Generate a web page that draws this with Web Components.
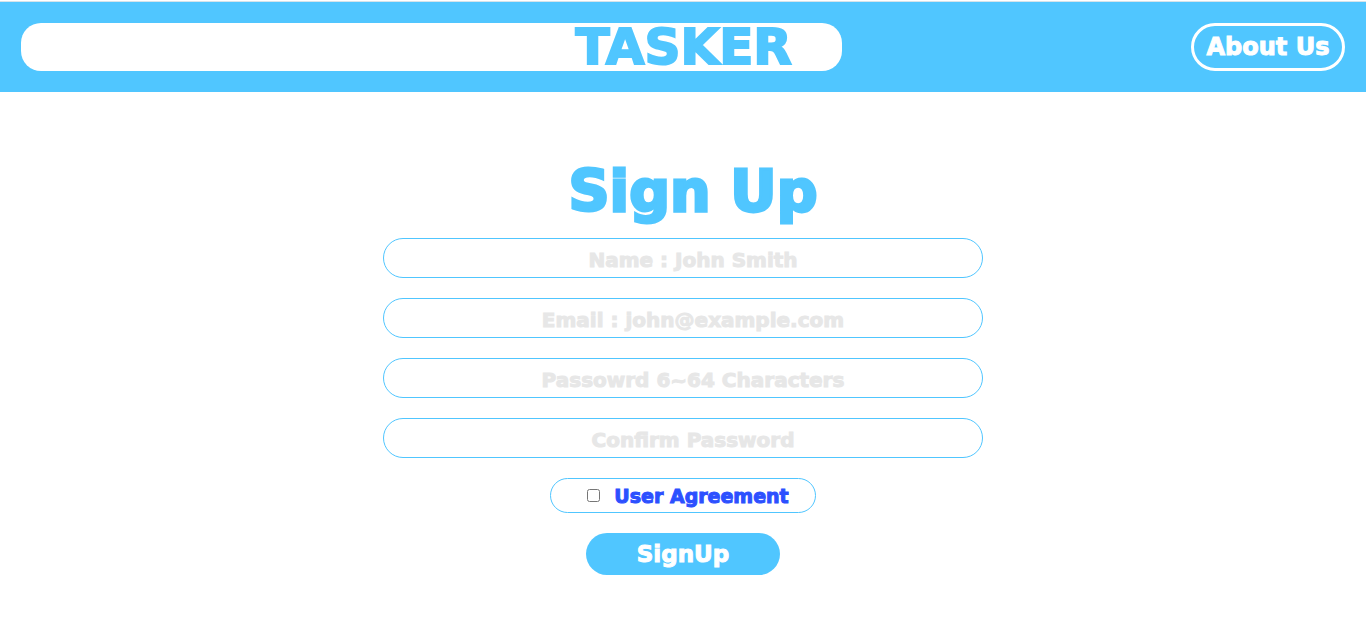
<!DOCTYPE html>
<html lang="en">
<head>
<meta charset="utf-8">
<meta name="viewport" content="width=device-width, initial-scale=1">
<title>Tasker - Sign Up</title>
<style>
  :root { --sky: #50c6ff; --link: #2c50ff; --hint: #e7e7e7; }
  body { margin: 0; background: #fff; font-family: "DejaVu Sans", Verdana, sans-serif; font-weight: 700; }
</style>
</head>
<body>
<tasker-header></tasker-header>
<main>
  <signup-form>
    <span slot="title">Sign Up</span>
    <pill-field type="text" hint="Name : John Smith"></pill-field>
    <pill-field type="email" hint="Email : john@example.com"></pill-field>
    <pill-field type="password" hint="Passowrd 6~64 Characters"></pill-field>
    <pill-field type="password" hint="Confirm Password"></pill-field>
    <agreement-check>User Agreement</agreement-check>
    <pill-button>SignUp</pill-button>
  </signup-form>
</main>
<script>
  const define = (name, html, setup) => customElements.define(name, class extends HTMLElement {
    constructor() {
      super();
      this.attachShadow({ mode: "open" }).innerHTML = html;
    }
    connectedCallback() { if (setup) setup(this, this.shadowRoot); }
  });

  define("tasker-header", `
    <style>
      :host { display: block; margin-top: 1px; border-top: 1px solid #d5e3ea; }
      header { display: flex; justify-content: space-between; align-items: center; padding: 21px; background: var(--sky); }
      .brand { box-sizing: border-box; width: 62%; height: 48px; padding-right: 50px; border-radius: 20px; background: #fff;
        color: var(--sky); font-size: 50px; line-height: 48px; text-align: right; -webkit-text-stroke: 2px; }
      .about { box-sizing: border-box; width: 154px; height: 48px; border: 3px solid #fff; border-radius: 24px; color: #fff;
        font-size: 24px; line-height: 42px; text-align: center; text-decoration: none; white-space: nowrap; -webkit-text-stroke: 1px; }
    </style>
    <header>
      <div class="brand">TASKER</div>
      <a class="about" href="#about">About Us</a>
    </header>`);

  define("signup-form", `
    <style>
      :host { display: block; padding: 72px 16px 64px; }
      form { display: flex; flex-direction: column; align-items: center; gap: 20px; max-width: 600px; margin: 0 auto; }
      h1 { margin: 0; padding-left: 20px; color: var(--sky); font-size: 57px; font-weight: 700; line-height: 54px; -webkit-text-stroke: 3px; }
    </style>
    <form>
      <h1><slot name="title"></slot></h1>
      <slot></slot>
    </form>`);

  define("pill-field", `
    <style>
      :host { display: block; width: 100%; }
      input { display: block; box-sizing: border-box; width: 100%; height: 40px; margin: 0; padding: 4px 0 0 20px;
        border: 1px solid var(--sky); border-radius: 20px; outline: none; background: #fff;
        color: var(--sky); font: inherit; font-size: 20px; text-align: center; }
      input::placeholder { color: var(--hint); opacity: 1; -webkit-text-stroke: 1px; }
    </style>
    <input>`, (host, root) => {
      const input = root.querySelector("input");
      input.type = host.getAttribute("type");
      input.placeholder = host.getAttribute("hint");
      input.setAttribute("aria-label", host.getAttribute("hint"));
    });

  define("agreement-check", `
    <style>
      :host { display: block; }
      div { display: flex; align-items: center; gap: 14px; box-sizing: border-box; height: 35px; padding: 0 26px 0 36px;
        border: 1px solid var(--sky); border-radius: 20px; }
      input { width: 13px; height: 13px; margin: 0; }
      label { font-size: 19px; line-height: 24px; -webkit-text-stroke: 1px; }
      a { color: var(--link); text-decoration: none; }
    </style>
    <div>
      <input type="checkbox" id="agree">
      <label for="agree"><a href="#agreement"><slot></slot></a></label>
    </div>`);

  define("pill-button", `
    <style>
      :host { display: block; }
      button { display: block; width: 194px; height: 42px; padding: 0; border: 0; border-radius: 21px; background: var(--sky);
        color: #fff; font: inherit; font-size: 23px; line-height: 42px; -webkit-text-stroke: 1px; }
    </style>
    <button type="button"><slot></slot></button>`);
</script>
</body>
</html>
